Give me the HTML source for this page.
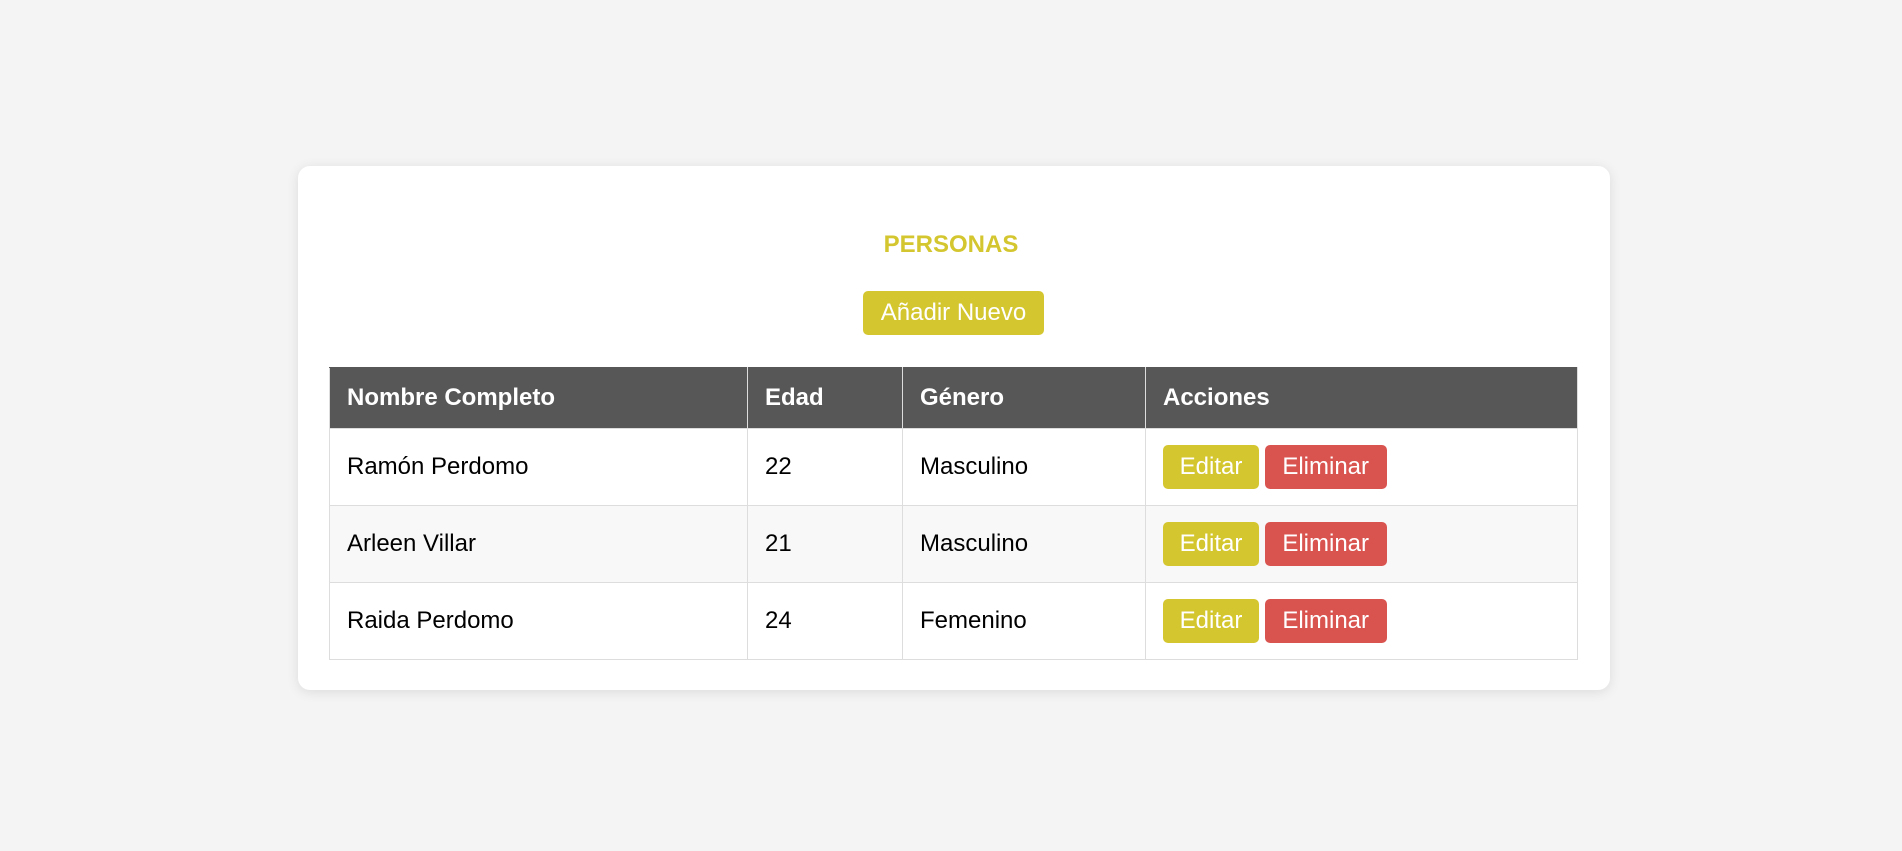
<!DOCTYPE html>
<html><head><meta charset="utf-8"><style>
html,body{margin:0;padding:0;background:#f4f4f4;width:1902px;height:851px;overflow:hidden;font-family:"Liberation Sans",Arial,sans-serif;}
.card{position:absolute;left:298px;top:166px;width:1312px;height:524px;background:#fff;border-radius:12px;box-shadow:0 2px 12px rgba(0,0,0,0.1);}
h1{position:absolute;left:0;right:0;top:229px;margin:0;text-align:center;font-size:24px;font-weight:bold;color:#d4c62f;line-height:32px;}
.btn{display:inline-block;box-sizing:border-box;height:44px;line-height:44px;font-size:24px;color:#fff;border-radius:5px;text-align:center;}
.y{background:#d4c62f}.r{background:#d9534f}
.add{position:absolute;left:863px;top:291px;width:181px;}
table{position:absolute;left:329px;top:367px;width:1249px;border-collapse:collapse;font-size:24px;}
th,td{border:1px solid #ddd;padding:0 0 0 17px;text-align:left;box-sizing:border-box;}
th{background:#575757;color:#fff;height:61px;font-weight:bold;border-color:#ddd;border-top-color:#575757}
td{height:77px;color:#000;background:#fff}
tr:nth-child(odd) td{background:#f8f8f8}
td .btn{vertical-align:middle}
</style></head><body>
<div class="card"></div>
<h1>PERSONAS</h1>
<div class="btn y add">Añadir Nuevo</div>
<table>
<tr><th style="width:418px">Nombre Completo</th><th style="width:155px">Edad</th><th style="width:243px">Género</th><th>Acciones</th></tr>
<tr><td>Ramón Perdomo</td><td>22</td><td>Masculino</td><td><span class="btn y" style="width:96px">Editar</span> <span class="btn r" style="width:122px;margin-left:-1px">Eliminar</span></td></tr>
<tr><td>Arleen Villar</td><td>21</td><td>Masculino</td><td><span class="btn y" style="width:96px">Editar</span> <span class="btn r" style="width:122px;margin-left:-1px">Eliminar</span></td></tr>
<tr><td>Raida Perdomo</td><td>24</td><td>Femenino</td><td><span class="btn y" style="width:96px">Editar</span> <span class="btn r" style="width:122px;margin-left:-1px">Eliminar</span></td></tr>
</table>
</body></html>
